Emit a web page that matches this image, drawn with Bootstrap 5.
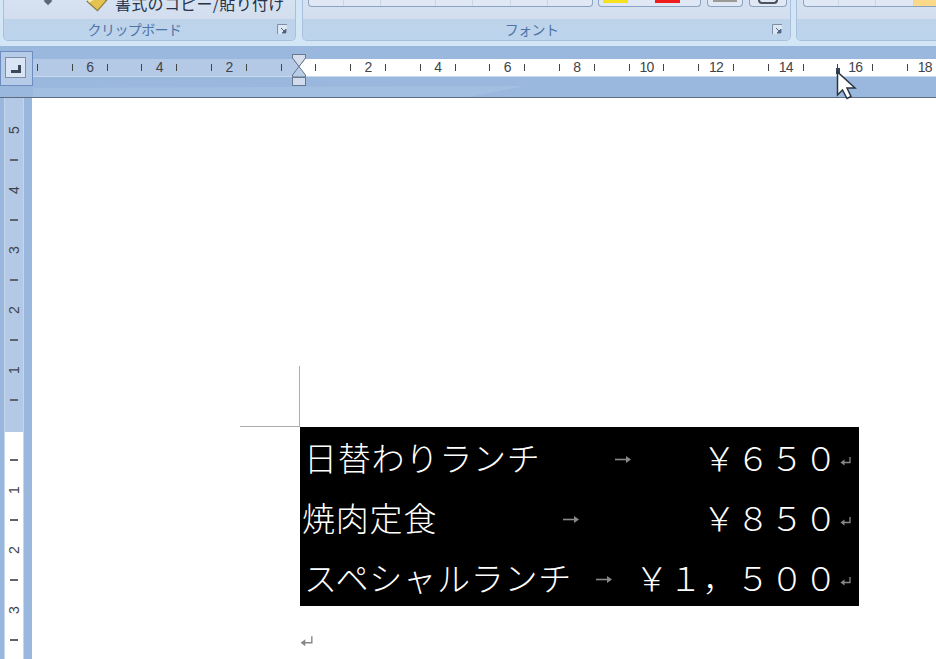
<!DOCTYPE html>
<html lang="ja">
<head>
<meta charset="utf-8">
<title>Word</title>
<link href="https://cdn.jsdelivr.net/npm/bootstrap@5.3.0/dist/css/bootstrap.min.css" rel="stylesheet">
<style>
html,body{height:100%;margin:0}
body{overflow:hidden;background:#fff;font-family:"Noto Sans CJK JP","Liberation Sans",sans-serif}
.app{width:936px;height:659px;position:relative;overflow:hidden}
.ribbon{height:46px;background:#d3e6f5;padding:0 0 0 3px;gap:6px;overflow:hidden}
.rgroup{height:41px;border:1px solid #a9c0dc;border-top:0;border-radius:0 0 5px 5px;flex:none;overflow:hidden;background:#bcd3ea}
.rg1{width:293px}.rg2{width:489px;margin-right:-1px}.rg3{width:150px}
.rtop{height:19px;background:linear-gradient(#d6e2f1,#d2deee);flex:none}
.rlabel{height:21px;color:#4f74a8;font-size:14px;letter-spacing:-.6px;line-height:21px;padding-right:7px;background:linear-gradient(#bdd3ea,#bcd4ec)}
.rlabel-text{flex:1;text-align:center;margin-right:12px}
.launcher{flex:none;margin-top:5px}
.pastetext{font-size:16px;letter-spacing:.3px;line-height:20px;color:#26334b;margin:-7px 0 0 5px;white-space:nowrap}
.diamond{margin-left:41px;width:6px;height:6px;background:#5e6673;transform:rotate(45deg);margin-top:-2px;flex:none}
.brush{margin-left:34px;flex:none;margin-top:-9px}
.tb{height:7px;border:1px solid #8ca3c0;border-top:0;border-radius:0 0 4px 4px;background:#dfe8f4;flex:none;overflow:hidden}
.tb1{width:285px;margin-left:5px}
.tbcell{border-right:1px solid #c9d6e6;height:100%;flex:none}
.swatch{height:3px;flex:none}
.sw-y{width:25px;margin-left:4px;background:#f6e21c}
.sw-r{width:25px;margin-left:27px;background:#ee1c1c}
.tb2{width:103px;margin-left:5px}
.tb3{width:36px;margin-left:6px}
.tb4{width:38px;margin-left:6px}
.tb5{margin-left:6px;width:140px}
.org{flex:1;background:#fbd98a}
.minibar{width:24px;height:2px;background:#9c9a96;margin:0 auto}
.arc{width:20px;height:4px;border:2px solid #4e525a;border-top:0;border-radius:0 0 9px 9px;margin:0 auto}
.rbar{height:52px;background:#9ab8dd;position:relative;border-bottom:1px solid #5c6b80}
.corner{width:33px;height:35px;margin-top:5px;background:#b5cbe8;border:1px solid #6c8dbd;flex:none;padding:5px 0 0 4px}
.cornerbtn{width:21px;height:21px;background:#d9e5f4;border:1px solid #7f8ea3;padding:4px}
.strip{height:18px;margin-top:13px;flex:1;padding-left:4px;overflow:hidden;border-bottom:1px solid #c8d9ee;background:linear-gradient(90deg,#b4c9e6 267px,#fff 267px);color:#3f444c;font:14px/17px "Liberation Sans",sans-serif;letter-spacing:-.8px}
.hc{width:34.8px;flex:none}
.hc::before{content:"";width:1px;height:7px;background:#444;flex:none;align-self:center}
.hcn{flex:1;text-align:center}
.overlay{position:absolute;left:0;top:0;pointer-events:none}
.side{width:32px;height:561px;background:#9ab8dd;flex:none;padding-left:4px}
.vrule{width:20px;height:100%;padding-top:17px;background:linear-gradient(#b4c9e6 334px,#fff 334px);border-left:1px solid #c4d6ec;border-right:1px solid #c4d6ec;color:#3f444c;font:14px/1 "Liberation Sans",sans-serif}
.vc{height:30px}
.vnum{transform:rotate(-90deg)}
.vtick{width:8px;height:2px;background:#5f646c}
.docpage{flex:1;background:#fff}
.crop{width:60px;height:61px;margin:268px 0 0 208px;border-right:1px solid #ababab;border-bottom:1px solid #ababab}
.blk{width:559px;height:179px;margin-left:268px;background:#000;color:#fff;font-weight:300;font-size:33px;letter-spacing:.8px;line-height:1}
.blkrow{height:59.67px;padding:2px 8px 0 4px;white-space:nowrap}
.r2{padding-left:2px}
.a1,.a2,.a3{margin-top:4px}
.a1{margin-left:74px}.a2{margin-left:126px}.a3{margin-left:24px}
.ret{margin-left:2px;flex:none;margin-top:8px}
.endmark{margin:29px 0 0 268px;display:block}
</style>
</head>
<body>
<div class="app">
  <div class="ribbon d-flex">
    <div class="rgroup rg1 d-flex flex-column">
      <div class="rtop d-flex">
        <div class="diamond"></div>
        <svg class="brush" width="25" height="21" viewBox="0 0 22 18"><path d="M2 9 L12 3 L19 8 L11 17 Z" fill="#e5c34e" stroke="#8a7a44"/><path d="M3 9 L12 4" stroke="#fff6c0" stroke-width="2"/><path d="M12 3l5-1 3 3-2 3z" fill="#cfd3da" stroke="#7a7f88" stroke-width=".6"/></svg>
        <div class="pastetext">書式のコピー/貼り付け</div>
      </div>
      <div class="rlabel d-flex"><span class="rlabel-text">クリップボード</span>
        <svg class="launcher" width="11" height="11" viewBox="0 0 11 11"><path d="M.5 10V.5H10" fill="none" stroke="#7d8ea6"/><rect x="1" y="1" width="9" height="9" fill="#dbe6f3"/><path d="M4 4l5 5M9 5v4H5z" fill="#4f6685" stroke="#4f6685"/></svg>
      </div>
    </div>
    <div class="rgroup rg2 d-flex flex-column">
      <div class="rtop d-flex">
        <div class="tb tb1 d-flex"><div class="tbcell" style="width:35px"></div><div class="tbcell" style="width:37px"></div><div class="tbcell" style="width:55px"></div><div class="tbcell" style="width:37px"></div><div class="tbcell" style="width:38px"></div><div class="tbcell" style="width:37px"></div></div>
        <div class="tb tb2 d-flex"><div class="swatch sw-y"></div><div class="swatch sw-r"></div></div>
        <div class="tb tb3"><div class="minibar"></div></div>
        <div class="tb tb4"><div class="arc"></div></div>
      </div>
      <div class="rlabel d-flex"><span class="rlabel-text">フォント</span>
        <svg class="launcher" width="11" height="11" viewBox="0 0 11 11"><path d="M.5 10V.5H10" fill="none" stroke="#7d8ea6"/><rect x="1" y="1" width="9" height="9" fill="#dbe6f3"/><path d="M4 4l5 5M9 5v4H5z" fill="#4f6685" stroke="#4f6685"/></svg>
      </div>
    </div>
    <div class="rgroup rg3 d-flex flex-column">
      <div class="rtop d-flex">
        <div class="tb tb5 d-flex"><div class="tbcell" style="width:35px"></div><div class="tbcell" style="width:37px"></div><div class="tbcell" style="width:38px"></div><div class="org"></div></div>
      </div>
      <div class="rlabel"></div>
    </div>
  </div>

  <div class="rbar d-flex">
    <div class="corner"><div class="cornerbtn"><svg class="d-block" width="11" height="11" viewBox="0 0 11 11"><path d="M1 9.5H9.5V3" fill="none" stroke="#3b4656" stroke-width="3"/></svg></div></div>
    <div class="strip d-flex">
      <div class="hc d-flex"></div><div class="hc d-flex"><span class="hcn">6</span></div>
      <div class="hc d-flex"></div><div class="hc d-flex"><span class="hcn">4</span></div>
      <div class="hc d-flex"></div><div class="hc d-flex"><span class="hcn">2</span></div>
      <div class="hc d-flex"></div><div class="hc d-flex"></div>
      <div class="hc d-flex"></div><div class="hc d-flex"><span class="hcn">2</span></div>
      <div class="hc d-flex"></div><div class="hc d-flex"><span class="hcn">4</span></div>
      <div class="hc d-flex"></div><div class="hc d-flex"><span class="hcn">6</span></div>
      <div class="hc d-flex"></div><div class="hc d-flex"><span class="hcn">8</span></div>
      <div class="hc d-flex"></div><div class="hc d-flex"><span class="hcn">10</span></div>
      <div class="hc d-flex"></div><div class="hc d-flex"><span class="hcn">12</span></div>
      <div class="hc d-flex"></div><div class="hc d-flex"><span class="hcn">14</span></div>
      <div class="hc d-flex"></div><div class="hc d-flex"><span class="hcn">16</span></div>
      <div class="hc d-flex"></div><div class="hc d-flex"><span class="hcn">18</span></div>
    </div>
  </div>

  <div class="d-flex">
    <div class="side">
      <div class="vrule d-flex flex-column">
        <div class="vc d-flex align-items-center justify-content-center"><span class="vnum">5</span></div>
        <div class="vc d-flex align-items-center justify-content-center"><span class="vtick"></span></div>
        <div class="vc d-flex align-items-center justify-content-center"><span class="vnum">4</span></div>
        <div class="vc d-flex align-items-center justify-content-center"><span class="vtick"></span></div>
        <div class="vc d-flex align-items-center justify-content-center"><span class="vnum">3</span></div>
        <div class="vc d-flex align-items-center justify-content-center"><span class="vtick"></span></div>
        <div class="vc d-flex align-items-center justify-content-center"><span class="vnum">2</span></div>
        <div class="vc d-flex align-items-center justify-content-center"><span class="vtick"></span></div>
        <div class="vc d-flex align-items-center justify-content-center"><span class="vnum">1</span></div>
        <div class="vc d-flex align-items-center justify-content-center"><span class="vtick"></span></div>
        <div class="vc"></div>
        <div class="vc d-flex align-items-center justify-content-center"><span class="vtick"></span></div>
        <div class="vc d-flex align-items-center justify-content-center"><span class="vnum">1</span></div>
        <div class="vc d-flex align-items-center justify-content-center"><span class="vtick"></span></div>
        <div class="vc d-flex align-items-center justify-content-center"><span class="vnum">2</span></div>
        <div class="vc d-flex align-items-center justify-content-center"><span class="vtick"></span></div>
        <div class="vc d-flex align-items-center justify-content-center"><span class="vnum">3</span></div>
        <div class="vc d-flex align-items-center justify-content-center"><span class="vtick"></span></div>
      </div>
    </div>
    <div class="docpage">
      <div class="crop"></div>
      <div class="blk">
        <div class="blkrow d-flex align-items-center">
          <span>日替わりランチ</span>
          <svg class="a1" width="17" height="9" viewBox="0 0 17 9"><path d="M0 4.5H12" stroke="#888" stroke-width="1.6"/><path d="M11 1l5 3.5-5 3.5z" fill="#888"/></svg>
          <span class="ms-auto">￥６５０</span>
          <svg class="ret" width="11" height="11" viewBox="0 0 11 11"><path d="M10 1v5.5H2" fill="none" stroke="#888" stroke-width="1.3"/><path d="M4.5 3.5L.5 6.5l4 3z" fill="#888"/></svg>
        </div>
        <div class="blkrow r2 d-flex align-items-center">
          <span>焼肉定食</span>
          <svg class="a2" width="17" height="9" viewBox="0 0 17 9"><path d="M0 4.5H12" stroke="#888" stroke-width="1.6"/><path d="M11 1l5 3.5-5 3.5z" fill="#888"/></svg>
          <span class="ms-auto">￥８５０</span>
          <svg class="ret" width="11" height="11" viewBox="0 0 11 11"><path d="M10 1v5.5H2" fill="none" stroke="#888" stroke-width="1.3"/><path d="M4.5 3.5L.5 6.5l4 3z" fill="#888"/></svg>
        </div>
        <div class="blkrow d-flex align-items-center">
          <span>スペシャルランチ</span>
          <svg class="a3" width="17" height="9" viewBox="0 0 17 9"><path d="M0 4.5H12" stroke="#888" stroke-width="1.6"/><path d="M11 1l5 3.5-5 3.5z" fill="#888"/></svg>
          <span class="ms-auto">￥１，５００</span>
          <svg class="ret" width="11" height="11" viewBox="0 0 11 11"><path d="M10 1v5.5H2" fill="none" stroke="#888" stroke-width="1.3"/><path d="M4.5 3.5L.5 6.5l4 3z" fill="#888"/></svg>
        </div>
      </div>
      <svg class="endmark" width="13" height="13" viewBox="0 0 11 11"><path d="M10 1v5.5H2" fill="none" stroke="#888" stroke-width="1.2"/><path d="M4.5 3.5L.5 6.5l4 3z" fill="#888"/></svg>
    </div>
  </div>

  <svg class="overlay" width="936" height="110" viewBox="0 0 936 110">
    <path d="M33 88 L525 86 L470 97 L33 97 Z" fill="#a8c2e3" opacity=".6"/>
    <path d="M292.5 54.5H305.5V58L299 66.5L305.5 75V77H292.5V75L299 66.5L292.5 58Z" fill="#b9cce6" stroke="#67788f"/>
    <path d="M292.5 54.5H305.5V58L299 66.5L292.5 58Z" fill="#d5deea" stroke="#67788f"/>
    <rect x="292.5" y="77.5" width="13" height="8" fill="#d0dced" stroke="#67788f"/>
    <rect x="836" y="68" width="4" height="6" fill="#39475c"/>
    <path d="M837.5 72 V95 L842.5 90 L847 98.5 L851 96.5 L847 88 L855 88 Z" fill="#fff" stroke="#2b3442" stroke-width="1.5"/>
  </svg>
</div>
<script src="https://cdn.jsdelivr.net/npm/bootstrap@5.3.0/dist/js/bootstrap.bundle.min.js"></script>
</body>
</html>
